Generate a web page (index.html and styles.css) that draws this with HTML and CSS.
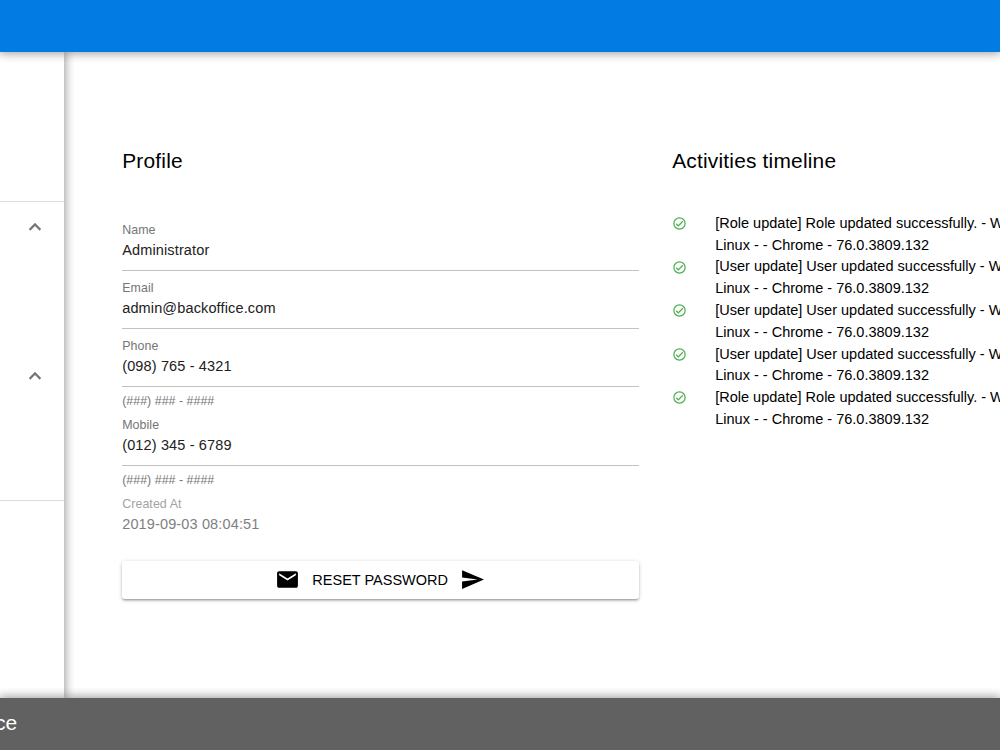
FILE: index.html
```html
<!DOCTYPE html>
<html lang="en">
<head>
  <meta charset="UTF-8" />
  <meta name="viewport" content="width=device-width, initial-scale=1.0"/>
  <title>Profile</title>
  <link rel="stylesheet" href="styles.css">
</head>
<body>
  <header class="header"></header>

  <div class="layout">
    <!-- Drawer -->
    <aside class="drawer">
      <div class="drawer-top"></div>
      <div class="drawer-group">
        <svg class="chevron" viewBox="0 0 24 24"><path d="M12 8l-6 6 1.41 1.41L12 10.83l4.59 4.58L18 14z"/></svg>
      </div>
      <div class="drawer-group last">
        <svg class="chevron" viewBox="0 0 24 24"><path d="M12 8l-6 6 1.41 1.41L12 10.83l4.59 4.58L18 14z"/></svg>
      </div>
    </aside>

    <main class="page">
      <section class="profile">
        <h2>Profile</h2>
        <div class="field">
          <div class="label">Name</div>
          <div class="value">Administrator</div>
        </div>
        <div class="field">
          <div class="label">Email</div>
          <div class="value">admin@backoffice.com</div>
        </div>
        <div class="field">
          <div class="label">Phone</div>
          <div class="value">(098) 765 - 4321</div>
        </div>
        <div class="hint">(###) ### - ####</div>
        <div class="field">
          <div class="label">Mobile</div>
          <div class="value">(012) 345 - 6789</div>
        </div>
        <div class="hint">(###) ### - ####</div>
        <div class="field disabled">
          <div class="label">Created At</div>
          <div class="value">2019-09-03 08:04:51</div>
        </div>
        <button class="reset-btn">
          <svg viewBox="0 0 24 24"><path d="M20 4H4c-1.1 0-1.99.9-1.99 2L2 18c0 1.1.9 2 2 2h16c1.1 0 2-.9 2-2V6c0-1.1-.9-2-2-2zm0 4l-8 5-8-5V6l8 5 8-5v2z"/></svg>
          <span>RESET PASSWORD</span>
          <svg viewBox="0 0 24 24"><path d="M2.01 21L23 12 2.01 3 2 10l15 2-15 2z"/></svg>
        </button>
      </section>

      <section class="activities">
        <h2>Activities timeline</h2>
        <ul class="timeline">
          <li>
            <svg viewBox="0 0 24 24"><path d="M12 2a10 10 0 1 0 0 20 10 10 0 0 0 0-20zm0 18a8 8 0 1 1 0-16 8 8 0 0 1 0 16zm4.6-12.4L10 14.2l-2.6-2.6L6 13l4 4 8-8z"/></svg>
            <div>[Role update] Role updated successfully. - W<br>Linux - - Chrome - 76.0.3809.132</div>
          </li>
          <li>
            <svg viewBox="0 0 24 24"><path d="M12 2a10 10 0 1 0 0 20 10 10 0 0 0 0-20zm0 18a8 8 0 1 1 0-16 8 8 0 0 1 0 16zm4.6-12.4L10 14.2l-2.6-2.6L6 13l4 4 8-8z"/></svg>
            <div>[User update] User updated successfully - W<br>Linux - - Chrome - 76.0.3809.132</div>
          </li>
          <li>
            <svg viewBox="0 0 24 24"><path d="M12 2a10 10 0 1 0 0 20 10 10 0 0 0 0-20zm0 18a8 8 0 1 1 0-16 8 8 0 0 1 0 16zm4.6-12.4L10 14.2l-2.6-2.6L6 13l4 4 8-8z"/></svg>
            <div>[User update] User updated successfully - W<br>Linux - - Chrome - 76.0.3809.132</div>
          </li>
          <li>
            <svg viewBox="0 0 24 24"><path d="M12 2a10 10 0 1 0 0 20 10 10 0 0 0 0-20zm0 18a8 8 0 1 1 0-16 8 8 0 0 1 0 16zm4.6-12.4L10 14.2l-2.6-2.6L6 13l4 4 8-8z"/></svg>
            <div>[User update] User updated successfully - W<br>Linux - - Chrome - 76.0.3809.132</div>
          </li>
          <li>
            <svg viewBox="0 0 24 24"><path d="M12 2a10 10 0 1 0 0 20 10 10 0 0 0 0-20zm0 18a8 8 0 1 1 0-16 8 8 0 0 1 0 16zm4.6-12.4L10 14.2l-2.6-2.6L6 13l4 4 8-8z"/></svg>
            <div>[Role update] Role updated successfully. - W<br>Linux - - Chrome - 76.0.3809.132</div>
          </li>
        </ul>
      </section>
    </main>
  </div>

  <footer class="footer">ce</footer>
</body>
</html>
```
FILE: styles.css
```css
* {
  box-sizing: border-box;
}

body {
  margin: 0;
  height: 750px;
  display: flex;
  flex-direction: column;
  overflow: hidden;
  background: #fff;
  color: #000;
  font-family: 'Liberation Sans', Arial, sans-serif;
  font-size: 14.53px;
}

.header {
  height: 51.5px;
  flex-shrink: 0;
  background: #027be3;
  box-shadow: 0 0 9px 2px rgba(0, 0, 0, 0.2), 0 0 10px rgba(0, 0, 0, 0.24);
  z-index: 2;
}

.layout {
  flex: 1;
  display: flex;
  min-height: 0;
}

.drawer {
  width: 64.4px;
  flex-shrink: 0;
  background: #fff;
  box-shadow: 0 0 9px 2px rgba(0, 0, 0, 0.2), 0 0 10px rgba(0, 0, 0, 0.24);
}

.drawer-top {
  height: 150.5px;
  border-bottom: 1px solid #dcdcdc;
}

.drawer-group {
  height: 149.5px;
  padding: 12.6px 0 0 23px;
}

.drawer-group.last {
  border-bottom: 1.5px solid #dcdcdc;
}

.chevron {
  display: block;
  width: 24px;
  height: 24px;
  fill: #757575;
  stroke: #757575;
  stroke-width: 0.4;
}

.page {
  display: flex;
  flex-shrink: 0;
  gap: 33px;
  width: 935.6px;
  padding: 94px 0 0 57.8px;
}

h2 {
  margin: 0;
  font-size: 20.9px;
  font-weight: 400;
  letter-spacing: 0.2px;
  line-height: 29px;
}

.profile {
  width: 517px;
  flex-shrink: 0;
}

.profile h2 {
  margin-bottom: 44px;
}

.field {
  height: 52px;
  padding-top: 3px;
  margin-bottom: 6px;
  border-bottom: 1px solid #c2c2c2;
}

.label {
  height: 16px;
  line-height: 16px;
  font-size: 12.4px;
  letter-spacing: 0.08px;
  color: #757575;
}

.value {
  height: 24px;
  line-height: 24px;
  letter-spacing: 0.13px;
  color: #212121;
}

.hint {
  height: 21px;
  line-height: 16px;
  font-size: 12.4px;
  letter-spacing: 0.03px;
  color: #757575;
}

.disabled {
  border: 0;
}

.disabled .label {
  color: #a3a3a3;
}

.disabled .value {
  color: #7f7f7f;
}

.reset-btn {
  display: flex;
  align-items: center;
  justify-content: center;
  gap: 12.5px;
  width: 100%;
  height: 38px;
  margin-top: 16px;
  padding: 0 1.5px 0 0;
  border: 0;
  border-radius: 3px;
  background: #fff;
  box-shadow: 0 1px 4px rgba(0, 0, 0, 0.2), 0 2px 2px rgba(0, 0, 0, 0.14), 0 2px 1px -1px rgba(0, 0, 0, 0.12);
  font: inherit;
  font-size: 14.5px;
  color: #000;
}

.reset-btn svg {
  width: 25px;
  height: 25px;
}

.reset-btn span + svg {
  margin-left: -0.5px;
}

.activities {
  flex: 1;
  min-width: 0;
}

.timeline {
  margin: 38.4px 0 0;
  padding: 0;
  list-style: none;
}

.timeline li {
  display: flex;
  line-height: 21.8px;
  white-space: nowrap;
}

.timeline svg {
  width: 15px;
  height: 15px;
  flex-shrink: 0;
  margin: 3.2px 28px 0 0;
  fill: #4caf50;
}

.timeline div {
  flex: 1;
  min-width: 0;
  overflow: hidden;
}

.footer {
  height: 52.5px;
  flex-shrink: 0;
  background: #616161;
  box-shadow: 0 0 9px 2px rgba(0, 0, 0, 0.2), 0 0 10px rgba(0, 0, 0, 0.24);
  color: #fff;
  font-size: 21px;
  line-height: 50px;
  z-index: 2;
  text-indent: -5px;
}
```
